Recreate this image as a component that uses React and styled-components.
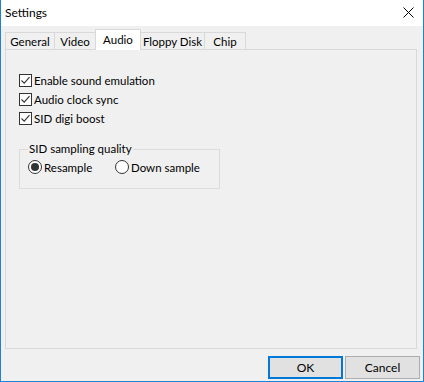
import styled, { createGlobalStyle } from "styled-components";

const Global = createGlobalStyle`
    html, body {
        margin: 0;
        padding: 0;
        background: #ffffff;
    }
    body {
        font-family: Lato, "Liberation Sans", sans-serif;
        font-size: 11px;
        color: #000;
    }
`

const tabs = [
    { label: "General", width: 50 },
    { label: "Video", width: 42 },
    { label: "Audio", width: 46 },
    { label: "Floppy Disk", width: 65 },
    { label: "Chip", width: 42 },
];

const checks = ["Enable sound emulation", "Audio clock sync", "SID digi boost"];

const CheckBox = ({ label }) => (
    <CheckRow>
        <Box>
            <svg width="11" height="11" viewBox="0 0 11 11">
                <path d="M1.5 5.5 L4.2 8.2 L9.5 2.2" fill="none" stroke="#333" strokeWidth="1.1" />
            </svg>
        </Box>
        <span>{label}</span>
    </CheckRow>
);

const Radio = ({ label, checked, width }) => (
    <RadioRow $w={width}>
        <Circle>{checked && <Dot />}</Circle>
        <span>{label}</span>
    </RadioRow>
);

const App = () => {
    return <>
        <Global/>
        <Window>
            <TitleBar>
                <Title>Settings</Title>
                <Close>
                    <svg width="11" height="11" viewBox="0 0 11 11">
                        <path d="M0.5 0.5 L10.5 10.5 M10.5 0.5 L0.5 10.5" stroke="#000" strokeWidth="1" />
                    </svg>
                </Close>
            </TitleBar>
            <Body>
                <TabStrip>
                    {tabs.map(t => (
                        <Tab key={t.label} $w={t.width} $active={t.label === "Audio"}>{t.label}</Tab>
                    ))}
                </TabStrip>
                <Panel>
                    <CheckList>
                        {checks.map(c => <CheckBox key={c} label={c}/>)}
                    </CheckList>
                    <Group>
                        <Legend>SID sampling quality</Legend>
                        <RadioLine>
                            <Radio label="Resample" checked width={87}/>
                            <Radio label="Down sample"/>
                        </RadioLine>
                    </Group>
                </Panel>
                <Footer>
                    <Button $default>OK</Button>
                    <Button>Cancel</Button>
                </Footer>
            </Body>
        </Window>
    </>;
}

export default App;

const Window = styled.div`
    width: 424px;
    height: 382px;
    box-sizing: border-box;
    border: 1px solid #1883d7;
    border-top: none;
    display: flex;
    flex-direction: column;
    background: #f0f0f0;
`

const TitleBar = styled.div`
    height: 26px;
    flex: none;
    background: #ffffff;
    display: flex;
    align-items: center;
    justify-content: space-between;
    padding: 0 9px 0 4px;
`

const Title = styled.span`
    font-size: 12px;
    margin-top: -1px;
`

const Close = styled.span`
    display: flex;
    margin-top: -1px;
`

const Body = styled.div`
    flex: 1;
    display: flex;
    flex-direction: column;
    padding: 3px 3px 0 4px;
`

const TabStrip = styled.div`
    display: flex;
    align-items: flex-end;
    height: 20px;
    padding-right: 3px;
`

const Tab = styled.div`
    box-sizing: border-box;
    width: ${p => p.$w}px;
    height: ${p => p.$active ? 21 : 17}px;
    margin-left: -1px;
    margin-bottom: ${p => p.$active ? -1 : 0}px;
    &:first-child { margin-left: 0; }
    border: 1px solid #d9d9d9;
    border-bottom: none;
    background: ${p => p.$active ? "#ffffff" : "#f0f0f0"};
    position: relative;
    z-index: ${p => p.$active ? 2 : 1};
    display: flex;
    justify-content: center;
    align-items: ${p => p.$active ? "flex-start" : "center"};
    padding-top: ${p => p.$active ? 2 : 0}px;
    line-height: 15px;
    font-size: 11.5px;
    white-space: nowrap;
`

const Panel = styled.div`
    box-sizing: border-box;
    height: 300px;
    margin-right: 3px;
    border: 1px solid #d9d9d9;
    background: #f0f0f0;
    padding: 21px 13px 0 13px;
`

const CheckList = styled.div`
    display: flex;
    flex-direction: column;
`

const CheckRow = styled.label`
    display: flex;
    align-items: center;
    height: 19px;
    gap: 2px;
    line-height: 13px;
    font-size: 11.5px;
`

const Box = styled.span`
    box-sizing: border-box;
    width: 13px;
    height: 13px;
    border: 1px solid #333;
    background: #fff;
    display: flex;
    align-items: center;
    justify-content: center;
`

const Group = styled.fieldset`
    box-sizing: border-box;
    width: 201px;
    height: 47px;
    margin: 14px 0 0 0;
    padding: 2px 0 0 8px;
    border: 1px solid #dcdcdc;
    border-radius: 0;
    font-size: 11.5px;
`

const Legend = styled.legend`
    padding: 0 1px;
    margin-left: 0;
    line-height: 14px;
`

const RadioLine = styled.div`
    display: flex;
`

const RadioRow = styled.label`
    display: flex;
    align-items: center;
    gap: 2px;
    height: 18px;
    width: ${p => p.$w ? `${p.$w}px` : "auto"};
`

const Circle = styled.span`
    box-sizing: border-box;
    width: 14px;
    height: 14px;
    border-radius: 50%;
    border: 1px solid #333;
    background: #fff;
    display: flex;
    align-items: center;
    justify-content: center;
`

const Dot = styled.span`
    width: 8px;
    height: 8px;
    border-radius: 50%;
    background: #333;
`

const Footer = styled.div`
    display: flex;
    justify-content: flex-end;
    gap: 2px;
    margin-top: 7px;
`

const Button = styled.button`
    box-sizing: border-box;
    width: 75px;
    height: 23px;
    font-family: inherit;
    font-size: 12px;
    color: #000;
    background: #e1e1e1;
    border: ${p => p.$default ? "2px solid #0078d7" : "1px solid #adadad"};
    padding: 0;
`
